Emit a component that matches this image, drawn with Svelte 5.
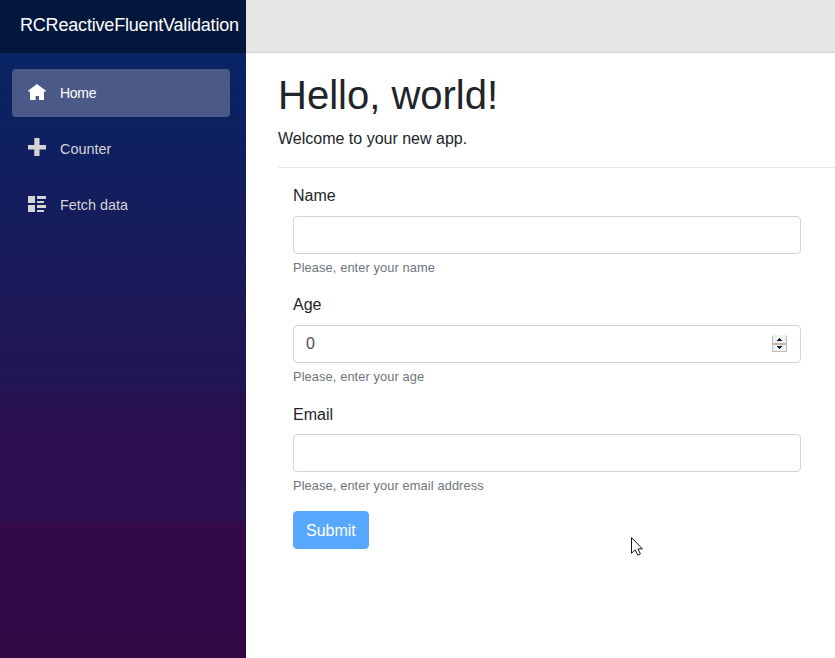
<script>
  let name = $state('');
  let age = $state('0');
  let email = $state('');
</script>

<div class="page">
  <aside class="sidebar">
    <div class="brand"><span>RCReactiveFluentValidation</span></div>
    <nav>
      <a class="item active" href="#home">
        <svg class="icon" width="20" height="20" viewBox="0 0 20 20" fill="currentColor">
          <path d="M10 2 L19 8.8 V9.6 H17 V18 H12 V14 H8.6 V18 H3 V9.6 H1 V8.8 Z" />
        </svg>
        <span class="home">Home</span>
      </a>
      <a class="item" href="#counter">
        <svg class="icon" width="20" height="20" viewBox="0 0 20 20" fill="currentColor">
          <path d="M7.3 0 H12.5 V7 H19 V11.6 H12.5 V18 H7.3 V11.6 H1 V7 H7.3 Z" />
        </svg>
        <span>Counter</span>
      </a>
      <a class="item" href="#fetchdata">
        <svg class="icon" width="20" height="20" viewBox="0 0 20 20" fill="currentColor">
          <path d="M1 2h7v7H1z M10 2h9v3h-9z M10 7h7v2H10z M1 11h7v7H1z M10 11h9v3h-9z M10 16h7v2H10z" />
        </svg>
        <span>Fetch data</span>
      </a>
    </nav>
  </aside>

  <main>
    <div class="topbar"></div>
    <section>
      <h1>Hello, world!</h1>
      <p>Welcome to your new app.</p>
      <hr />
      <form onsubmit={(event) => event.preventDefault()}>
        <div class="group">
          <label for="name">Name</label>
          <input id="name" bind:value={name} />
          <small>Please, enter your name</small>
        </div>
        <div class="group">
          <label for="age">Age</label>
          <div class="number">
            <input id="age" inputmode="numeric" bind:value={age} />
            <svg class="spinner" width="15" height="17" viewBox="0 0 15 17">
              <path fill="#edf1ef" d="M0 0h15v17H0z" />
              <path fill="#c9b5b2" d="M0 1h1v16H0z M14 1h1v16h-1z M1 8h13v2H1z M1 16h13v1H1z" />
              <path fill="#0b1734" d="M7 3h1v1h1v1h1v1H5V5h1V4h1z M5 11h5v1H9v1H8v1H7v-1H6v-1H5z" />
            </svg>
          </div>
          <small>Please, enter your age</small>
        </div>
        <div class="group last">
          <label for="email">Email</label>
          <input id="email" bind:value={email} />
          <small>Please, enter your email address</small>
        </div>
        <button type="submit">Submit</button>
      </form>
    </section>
  </main>

  <svg class="cursor" width="14" height="21" viewBox="0 0 14 21">
    <path d="M1.5 1.5 V17.2 L5.2 13.9 L7.8 19.2 L10.4 18 L8 12.9 H12.4 Z" fill="#fff" stroke="#15152f" stroke-width="1" />
  </svg>
</div>

<style>
  :global(body) {
    margin: 0;
    overflow: hidden;
  }
  .page {
    position: relative;
    display: flex;
    width: 100%;
    height: 658px;
    overflow: hidden;
    background: #fff;
    color: #212529;
    font: 16px/1.5 "Liberation Sans", Arial, sans-serif;
  }
  .page * {
    box-sizing: border-box;
  }
  .sidebar {
    flex: 0 0 246px;
    background: linear-gradient(#052767 0, #092464 60px, #151c5c 220px, #231553 390px, #261050 392px, #2a0e4f 440px, #2c1050 521px, #330947 522px, #320845 100%);
  }
  .brand {
    display: flex;
    align-items: center;
    height: 53px;
    padding: 0 0 3px 20px;
    background: #03173d;
    color: #fff;
    font-size: 18px;
    white-space: nowrap;
    letter-spacing: -0.19px;
  }
  nav {
    display: flex;
    flex-direction: column;
    gap: 8px;
    padding: 16px 16px 0 12px;
  }
  .item {
    display: flex;
    align-items: center;
    height: 48px;
    padding-left: 15px;
    border-radius: 4px;
    color: #d5d5d5;
    font-size: 14.4px;
    text-decoration: none;
  }
  .item span {
    padding-top: 2px;
  }
  .item .home {
    padding-top: 0;
    font-size: 14px;
    letter-spacing: -0.3px;
  }
  .active {
    background: #4b5988;
    color: #fff;
  }
  .icon {
    flex: none;
    margin: 0 13px 2px 0;
  }
  main {
    flex: 1;
    min-width: 0;
  }
  .topbar {
    height: 53px;
    background: #e6e6e6;
    border-bottom: 1px solid #d3d3d3;
  }
  section {
    padding: 18px 0 0 32px;
  }
  h1 {
    margin: 0 0 8px;
    font-size: 40px;
    font-weight: 400;
    line-height: 48px;
  }
  p {
    margin: 0;
  }
  hr {
    height: 1px;
    margin: 16px 0;
    border: 0;
    background: #e5e5e5;
  }
  form {
    width: 538px;
    padding: 0 15px;
  }
  .group {
    margin-bottom: 16px;
  }
  label {
    display: block;
    margin-bottom: 8px;
  }
  .last label {
    padding-top: 1px;
    margin-bottom: 7px;
  }
  input {
    display: block;
    width: 100%;
    height: 38px;
    padding: 6px 12px;
    border: 1px solid #ced4da;
    border-radius: 4px;
    background: #fff;
    color: #495057;
    font: inherit;
    outline: 0;
  }
  .number {
    position: relative;
  }
  .spinner {
    position: absolute;
    right: 14px;
    top: 10px;
  }
  small {
    display: block;
    margin-top: 4px;
    color: #6c757d;
    font-size: 12.8px;
    line-height: 19px;
    letter-spacing: 0.115px;
  }
  button {
    height: 38px;
    padding: 7px 12px 5px;
    border: 1px solid #59a8ff;
    border-radius: 4px;
    background: #59a8ff;
    color: #fff;
    font: inherit;
  }
  .cursor {
    position: absolute;
    left: 630px;
    top: 536px;
  }
</style>
